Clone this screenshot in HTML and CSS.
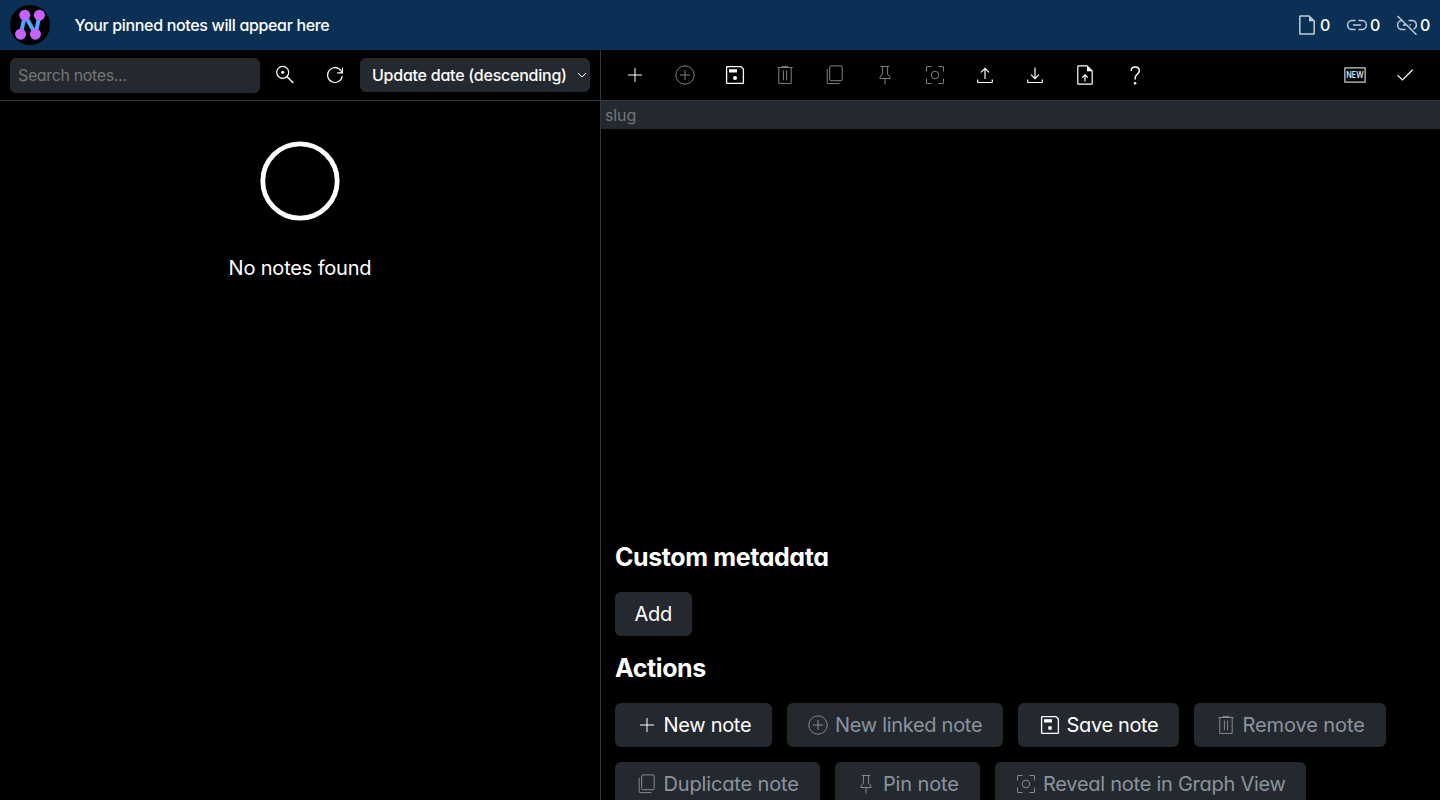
FILE: index.html
```
<!DOCTYPE html>
<html lang="en">
<head>
<meta charset="utf-8">
<title>Notes</title>
<link rel="stylesheet" href="styles.css">
</head>
<body>
<svg class="sprite" aria-hidden="true">
  <symbol id="plus" viewBox="0 0 24 24"><path d="M12 5v14M5 12h14"/></symbol>
  <symbol id="plus-circle" viewBox="0 0 24 24"><circle cx="12" cy="12" r="9.2"/><path d="M12 7v10M7 12h10"/></symbol>
  <symbol id="save" viewBox="0 0 24 24"><path d="M4.3 3.6H18L20.4 6V19.7q0 .7-.7.7H4.3q-.7 0-.7-.7V4.3q0-.7.7-.7Z" stroke-width="1.3"/><path class="fill" d="M6 6.2h8v3.3H6Z"/><circle class="fill" cx="12" cy="15" r="2"/></symbol>
  <symbol id="trash" viewBox="0 0 24 24"><path d="M4.3 4.5h15.4M9 4V3.4h6V4M5.8 4.5V20.4H18.2V4.5M10.4 7.5v9.8M13.6 7.5v9.8"/></symbol>
  <symbol id="copy" viewBox="0 0 24 24"><rect x="6.7" y="2.9" width="12.5" height="14.8" rx="1"/><path d="M4.2 6v13.8q0 .8.8.8H16.3"/></symbol>
  <symbol id="pin" viewBox="0 0 24 24"><path d="M7.8 3.5h8.4M9.4 3.5V11L7 14v1.5H17V14L14.6 11V3.5M12 15.5v6"/></symbol>
  <symbol id="focus" viewBox="0 0 24 24"><circle cx="12" cy="12" r="3.8"/><path d="M3.5 8.5V4q0-.5.5-.5H8.5M15.5 3.5H20q.5 0 .5.5V8.5M20.5 15.5V20q0 .5-.5.5H15.5M8.5 20.5H4q-.5 0-.5-.5V15.5"/></symbol>
  <symbol id="upload" viewBox="0 0 24 24"><path d="M12 16V5.5M8 9.3l4-4 4 4M4.7 16.5V19q0 .5.5.5H18.8q.5 0 .5-.5V16.5" stroke-width="1.2"/></symbol>
  <symbol id="download" viewBox="0 0 24 24"><path d="M12 4.5V15.3M8 11.6l4 4 4-4M4.7 16.5V19q0 .5.5.5H18.8q.5 0 .5-.5V16.5" stroke-width="1.2"/></symbol>
  <symbol id="file" viewBox="0 0 24 24"><path d="M14 2.9H5.5q-.7 0-.7.7V20.4q0 .7.7.7H18.5q.7 0 .7-.7V8Z" stroke-width="1.5"/><path class="fill" d="M14 3l5.2 5.3H14Z"/></symbol>
  <symbol id="file-up" viewBox="0 0 24 24"><path d="M14 2.9H5.5q-.7 0-.7.7V20.4q0 .7.7.7H18.5q.7 0 .7-.7V8Z" stroke-width="1.2"/><path class="fill" d="M14 3l5.2 5.3H14Z"/><path d="M12 18.5V12M9.2 14.7l2.8-2.8 2.8 2.8" stroke-width="1.2"/></symbol>
  <symbol id="help" viewBox="0 0 24 24"><path d="M8.2 8V7.6C8.2 5.2 9.8 4 12.2 4s4.1 1.4 4.1 3.6c0 3.5-4.1 3.8-4.1 7.2v1.6" stroke-width="1.5"/><circle class="fill" cx="12.1" cy="20.3" r="1.3"/></symbol>
  <symbol id="check" viewBox="0 0 24 24"><path d="M4.6 12.1l4.8 4.8L19.7 6.7" stroke-width="1.2"/></symbol>
  <symbol id="search" viewBox="0 0 24 24"><circle cx="9.7" cy="9.3" r="6" stroke-width="1.2"/><circle class="fill" cx="9.7" cy="9.3" r="1.5"/><path d="M13.9 13.5L20.3 19.9" stroke-width="1.4"/></symbol>
  <symbol id="refresh" viewBox="0 0 24 24"><path d="M19.3 13.2A7.4 7.4 0 1 1 18.3 8.2L19.3 9.7M19.5 4.5V9.8H14.2" stroke-width="1.15"/></symbol>
  <symbol id="link" viewBox="0 0 24 24"><path d="M10.5 7.6H7a4.4 4.4 0 0 0 0 8.8h3.5M13.5 7.6H17a4.4 4.4 0 0 1 0 8.8H13.5M8 12h8" stroke-width="1.5"/></symbol>
  <symbol id="unlink" viewBox="0 0 24 24"><path d="M7.5 7.6H7a4.4 4.4 0 0 0 0 8.8h3.5M13.5 7.6H17a4.4 4.4 0 0 1 1.5 8.5M8 12h3M14.5 12h1.5M2.5 3L21.5 21.7" stroke-width="1.5"/></symbol>
</svg>

<header class="header">
  <svg class="logo" viewBox="0 0 40 40"><circle cx="20" cy="20" r="20"/><path d="M10.7 29L15 10.5 25.5 29 29.5 10.5"/><g><circle cx="14.8" cy="10.2" r="5.5"/><circle cx="29.4" cy="10.2" r="5.5"/><circle cx="10.6" cy="29.2" r="5.5"/><circle cx="25.4" cy="29.2" r="5.5"/></g></svg>
  <p class="pinned">Your pinned notes will appear here</p>
  <div class="stats">
    <span class="stat"><svg class="icon"><use href="#file"/></svg>0</span>
    <span class="stat"><svg class="icon"><use href="#link"/></svg>0</span>
    <span class="stat"><svg class="icon"><use href="#unlink"/></svg>0</span>
  </div>
</header>

<main class="main">
  <section class="list">
    <div class="toolbar list-bar">
      <input class="search" type="text" placeholder="Search notes...">
      <button class="tool"><svg class="icon"><use href="#search"/></svg></button>
      <button class="tool"><svg class="icon"><use href="#refresh"/></svg></button>
      <div class="sort"><span>Update date (descending)</span><svg class="chevron" viewBox="0 0 10 6"><path d="M1 1l4 4 4-4"/></svg></div>
    </div>
    <div class="empty">
      <svg class="ring" viewBox="0 0 80 80"><circle cx="40" cy="40" r="37.2"/></svg>
      <p class="empty-text">No notes found</p>
    </div>
  </section>
  <section class="editor">
    <div class="toolbar editor-bar">
      <button class="tool"><svg class="icon"><use href="#plus"/></svg></button>
      <button class="tool" disabled><svg class="icon"><use href="#plus-circle"/></svg></button>
      <button class="tool"><svg class="icon"><use href="#save"/></svg></button>
      <button class="tool" disabled><svg class="icon"><use href="#trash"/></svg></button>
      <button class="tool" disabled><svg class="icon"><use href="#copy"/></svg></button>
      <button class="tool" disabled><svg class="icon"><use href="#pin"/></svg></button>
      <button class="tool" disabled><svg class="icon"><use href="#focus"/></svg></button>
      <button class="tool"><svg class="icon"><use href="#upload"/></svg></button>
      <button class="tool"><svg class="icon"><use href="#download"/></svg></button>
      <button class="tool"><svg class="icon"><use href="#file-up"/></svg></button>
      <button class="tool"><svg class="icon"><use href="#help"/></svg></button>
      <span class="spacer"></span>
      <button class="tool"><svg class="icon" viewBox="0 0 24 24"><rect x="1.9" y="4.9" width="20.2" height="14.2"/><text class="new-label" x="12" y="15.1" text-anchor="middle" textLength="17.4" lengthAdjust="spacingAndGlyphs">NEW</text></svg></button>
      <button class="tool"><svg class="icon"><use href="#check"/></svg></button>
    </div>
    <input class="slug" type="text" placeholder="slug">
    <div class="content"></div>
    <div class="details">
      <h2 class="heading">Custom metadata</h2>
      <button class="button add">Add</button>
      <h2 class="heading">Actions</h2>
      <div class="actions">
        <button class="button new-note"><svg class="icon"><use href="#plus"/></svg><span>New note</span></button>
        <button class="button linked" disabled><svg class="icon"><use href="#plus-circle"/></svg><span>New linked note</span></button>
        <button class="button save"><svg class="icon"><use href="#save"/></svg><span>Save note</span></button>
        <button class="button remove" disabled><svg class="icon"><use href="#trash"/></svg><span>Remove note</span></button>
        <button class="button duplicate" disabled><svg class="icon"><use href="#copy"/></svg><span>Duplicate note</span></button>
        <button class="button pin-note" disabled><svg class="icon"><use href="#pin"/></svg><span>Pin note</span></button>
        <button class="button reveal" disabled><svg class="icon"><use href="#focus"/></svg><span>Reveal note in Graph View</span></button>
      </div>
    </div>
  </section>
</main>
</body>
</html>
```
FILE: styles.css
```
* { box-sizing: border-box; }
body {
  margin: 0;
  height: 100vh;
  overflow: hidden;
  display: flex;
  flex-direction: column;
  background: #000;
  color: #fff;
  font: 16px Inter, "Liberation Sans", sans-serif;
  font-feature-settings: "cv11" 1;
}
button, input { font: inherit; font-feature-settings: inherit; color: inherit; border: 0; margin: 0; outline: 0; }
p, h2 { margin: 0; }
.sprite { position: absolute; width: 0; height: 0; }
.icon { width: 24px; height: 24px; flex: none; fill: none; stroke: #fff; stroke-width: 1; }
.fill { fill: #fff; stroke: none; }
.new-label { font: 500 8.4px Inter, sans-serif; fill: #fff; stroke: none; }

.header { height: 50px; flex: none; display: flex; align-items: center; padding-left: 10px; background: #0a3055; }
.logo { width: 40px; height: 40px; }
.logo path { fill: none; stroke: #4da6ff; stroke-width: 4; }
.logo g { fill: #c561ff; }
.pinned { margin-left: 24.5px; line-height: 20px; letter-spacing: -0.34px; font-weight: 500; }
.stats { margin-left: auto; display: flex; }
.stat { width: 50px; padding-left: 4.5px; display: flex; align-items: center; gap: 1.5px; font-weight: 500; }
.stat .icon { opacity: .75; }

.main { flex: 1; min-height: 0; display: flex; }
.list { width: 600px; flex: none; }
.toolbar { height: 51px; flex: none; display: flex; align-items: center; border-bottom: 1px solid #30363d; }
.list-bar { padding: 0 10px; }
.search { width: 250px; height: 35px; padding: 0 8px; border-radius: 6px; background: #24292f; letter-spacing: -0.36px; }
.search::placeholder, .slug::placeholder { color: #757575; opacity: 1; }
.tool { width: 50px; height: 50px; padding: 0; display: flex; align-items: center; justify-content: center; background: none; }
.tool:disabled .icon { opacity: .5; }
.sort { width: 230px; height: 34px; padding: 0 3px 0 12px; display: flex; align-items: center; justify-content: space-between; border-radius: 6px; background: #24292f; white-space: nowrap; font-weight: 500; letter-spacing: -0.24px; }
.chevron { width: 10px; height: 6px; flex: none; fill: none; stroke: #fff; stroke-width: 1; }
.empty { display: flex; flex-direction: column; align-items: center; padding-top: 40px; }
.ring { width: 80px; height: 80px; fill: none; stroke: #fff; stroke-width: 4.8; }
.empty-text { margin-top: 33px; font-size: 20px; line-height: 28px; letter-spacing: -0.18px; }

.editor { flex: 1; min-width: 0; display: flex; flex-direction: column; border-left: 1px solid #30363d; }
.editor-bar { padding: 0 10px 0 9px; }
.spacer { flex: 1; }
.slug { height: 28px; flex: none; padding: 0 4px; border-radius: 0; background: #24292f; letter-spacing: -0.1px; }
.content { height: 411px; flex: none; }
.details { flex: none; padding-left: 14px; }
.heading { font-size: 25px; line-height: 34px; font-weight: 700; letter-spacing: -0.4px; }
.button { height: 44px; padding: 0 0 0 19.5px; display: flex; align-items: center; gap: 5px; border-radius: 6px; background: #24292f; font-size: 20px; white-space: nowrap; letter-spacing: -0.3px; }
.button:disabled { color: #8b949e; }
.button:disabled .icon { opacity: .45; }
.add { width: 77px; margin: 18px 0 15px; }
.actions { display: flex; flex-wrap: wrap; gap: 15px; margin-top: 18px; }
.new-note { width: 156.5px; }
.linked { width: 216.5px; }
.save { width: 161px; letter-spacing: -0.35px; }
.remove { width: 192px; letter-spacing: -0.1px; }
.duplicate { width: 204.5px; letter-spacing: -0.15px; }
.pin-note { width: 145px; letter-spacing: -0.15px; }
.reveal { width: 311px; letter-spacing: -0.26px; }
```
